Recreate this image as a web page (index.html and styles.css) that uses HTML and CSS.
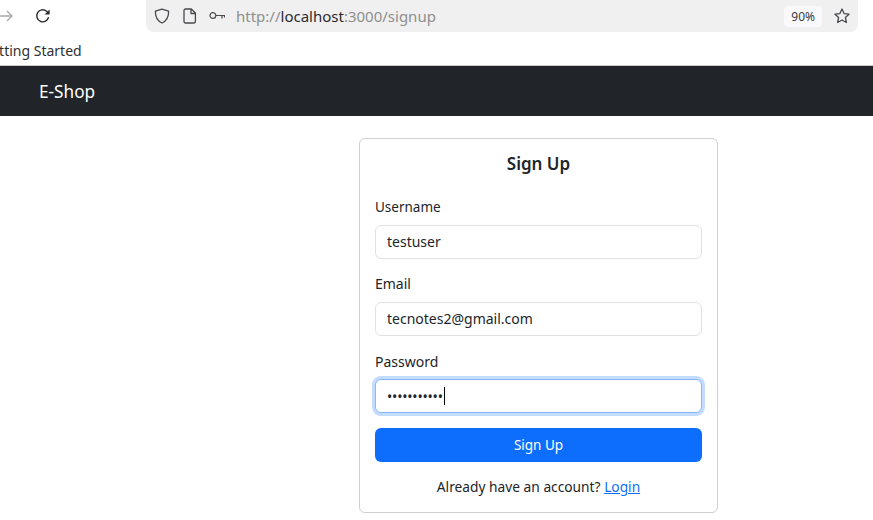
FILE: index.html
```html
<!DOCTYPE html>
<html lang="en">
<head>
  <meta charset="UTF-8" />
  <title>Sign Up</title>
  <meta name="viewport" content="width=device-width, initial-scale=1.0" />
  <link rel="stylesheet" href="styles.css">
</head>
<body>
  <div class="toolbar">
    <svg class="icon-forward" width="16" height="16" viewBox="0 0 16 16"><path d="M0 8h14M9 3l5 5-5 5" fill="none" stroke="#a8a8a8" stroke-width="1.3"/></svg>
    <svg class="icon-reload" width="16" height="16" viewBox="0 0 16 16"><path d="M13.600 9.200A6 6 0 1 1 11.600 3.200L14 5.200" fill="none" stroke="#2b2b2f" stroke-width="1.400"/><path d="M14.600 1.400v5h-5z" fill="#2b2b2f"/></svg>
    <div class="urlbar">
      <svg class="icon-shield" width="16" height="16" viewBox="0 0 16 16"><path d="M8 1.200 14.600 3.200C14.800 9 12.600 12.800 8 15 3.400 12.800 1.200 9 1.400 3.200z" fill="none" stroke="#4a4a4f" stroke-width="1.300" stroke-linejoin="round"/></svg>
      <svg class="icon-page" width="14" height="16" viewBox="0 0 14 16"><path d="M2.500 1h5.800L12.400 5v8.500A1.500 1.500 0 0 1 11 15H2.500A1.500 1.500 0 0 1 1 13.500V2.500A1.500 1.500 0 0 1 2.500 1zM8 1v4.500h4.400" fill="none" stroke="#4a4a4f" stroke-width="1.300" stroke-linejoin="round"/></svg>
      <svg class="icon-key" width="16" height="16" viewBox="0 0 16 16"><circle cx="3.900" cy="7.500" r="2.900" fill="none" stroke="#4a4a4f" stroke-width="1.200"/><path d="M6.800 7.500H16M13 7.500v3M15.500 7.500v2" fill="none" stroke="#4a4a4f" stroke-width="1.200"/></svg>
      <span class="url">http://<b>localhost</b>:3000/signup</span>
      <span class="zoom-level">90%</span>
      <svg class="icon-star" width="16" height="16" viewBox="0 0 16 16"><path d="M8 1 10.100 5.600 15 6.200 11.400 9.500 12.400 14.500 8 12 3.600 14.500 4.600 9.500 1 6.200 5.900 5.600z" fill="none" stroke="#4a4a4f" stroke-width="1.300" stroke-linejoin="round"/></svg>
    </div>
  </div>
  <div class="bookmarks"><span class="bookmark">Getting Started</span></div>

  <nav class="navbar"><a class="brand" href="#">E-Shop</a></nav>

  <main class="page">
    <form class="card">
      <h2>Sign Up</h2>
      <div class="field">
        <label for="username">Username</label>
        <input type="text" id="username" value="testuser" />
      </div>
      <div class="field">
        <label for="email">Email</label>
        <input type="text" id="email" value="tecnotes2@gmail.com" />
      </div>
      <div class="field">
        <label for="password">Password</label>
        <div class="input focused"><span class="dots">•••••••••••</span><span class="caret"></span></div>
      </div>
      <button type="button">Sign Up</button>
      <p class="login">Already have an account? <a href="#">Login</a></p>
    </form>
  </main>
</body>
</html>
```

FILE: styles.css
```css
html, body { margin: 0; padding: 0; height: 520px; overflow: hidden; background: #fff; }
body { font-family: "Noto Sans", sans-serif; font-size: 14px; color: #212529; }
* { box-sizing: border-box; }

.toolbar { height: 40px; display: flex; align-items: flex-start; padding-right: 15px; overflow: hidden; }
.icon-forward { margin: 8px 0 0 -2px; flex: none; }
.icon-reload { margin: 8px 0 0 21px; flex: none; }
.urlbar { flex: 1; height: 32px; margin-left: 95px; background: #f0f0f0; border-radius: 0 0 8px 8px; display: flex; align-items: center; padding: 0 8px; }
.icon-page { margin-left: 13px; }
.icon-key { margin-left: 12px; }
.url { margin-left: 11px; font-size: 15px; color: #8f8f8f; }
.url b { font-weight: 400; color: #2b2b2f; }
.zoom-level { margin-left: auto; background: #f9f9fb; border-radius: 4px; font-size: 12px; color: #3a3a40; padding: 2px 7px; height: 21px; }
.icon-star { margin-left: 12px; }

.bookmarks { height: 26px; border-bottom: 1px solid #c8c8c8; overflow: hidden; line-height: 21px; }
.bookmark { margin-left: -19px; color: #2f2f33; font-size: 14px; }

.navbar { height: 50px; background: #212529; display: flex; align-items: center; padding-left: 39px; }
.brand { color: #fff; font-size: 17.2px; text-decoration: none; }

.page { display: flex; justify-content: flex-start; padding: 22px 0 0 359px; }
.card { width: 359px; height: 375px; border: 1px solid #ced1d4; border-radius: 6px; padding: 12px 15px 0; background: #fff; }
h2 { margin: 0 0 20px; font-size: 17px; font-weight: 600; line-height: 26px; text-align: center; color: #212529; }
.field { margin-bottom: 14px; }
label { display: block; line-height: 21px; margin-bottom: 8px; }
.field:first-of-type label { font-size: 13.500px; margin-bottom: 7px; }
.field:last-of-type label { padding-top: 1px; margin-bottom: 7px; }
input, .input { display: block; width: 100%; height: 34px; padding: 0 11px 2px; border: 1px solid #dee2e6; border-radius: 6px; font: inherit; color: #212529; background: #fff; outline: none; }
.input { display: flex; align-items: center; padding-bottom: 0; }
.focused { border-color: #86b7fe; box-shadow: 0 0 0 3px rgba(13,110,253,.25); }
.dots { font-size: 14px; letter-spacing: -0.2px; }
.caret { width: 1px; height: 18px; background: #000; margin-left: 1px; }
button { display: block; width: 100%; height: 34px; margin-top: 15px; border: none; border-radius: 6px; background: #0d6efd; color: #fff; font: inherit; font-size: 13.500px; }
.login { margin: 14px 0 0; text-align: center; line-height: 21px; font-size: 13.750px; }
.login a { color: #0d6efd; }
```
